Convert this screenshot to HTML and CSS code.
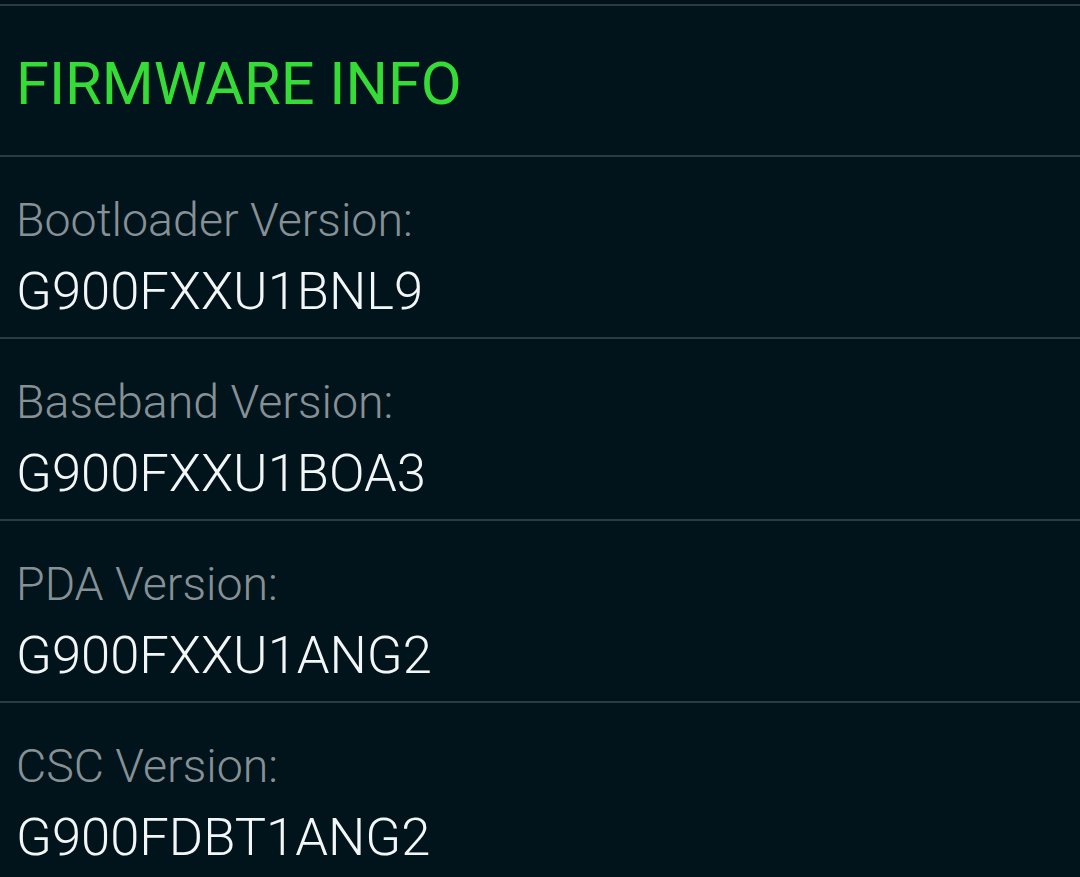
FILE: index.html
```html
<!DOCTYPE html>
<html lang="en">
<head>
<meta charset="utf-8">
<title>Firmware Info</title>
<link rel="stylesheet" href="styles.css">
</head>
<body>
<div class="screen">
  <div class="top-gap"></div>
  <div class="divider"></div>
  <header class="section-header">
    <h1 class="section-title">FIRMWARE INFO</h1>
  </header>
  <div class="divider"></div>
  <div class="row">
    <div class="label">Bootloader Version:</div>
    <div class="value">G900FXXU1BNL9</div>
  </div>
  <div class="divider"></div>
  <div class="row">
    <div class="label">Baseband Version:</div>
    <div class="value">G900FXXU1BOA3</div>
  </div>
  <div class="divider"></div>
  <div class="row">
    <div class="label">PDA Version:</div>
    <div class="value">G900FXXU1ANG2</div>
  </div>
  <div class="divider"></div>
  <div class="row">
    <div class="label">CSC Version:</div>
    <div class="value">G900FDBT1ANG2</div>
  </div>
  <div class="divider"></div>
</div>
</body>
</html>
```

FILE: styles.css
```css
html, body {
  margin: 0;
  padding: 0;
  background: #02141b;
  overflow: hidden;
  height: 877px;
}

.screen {
  display: flex;
  flex-direction: column;
  font-family: Roboto, "Liberation Sans", sans-serif;
  font-weight: 300;
}

.top-gap {
  height: 4px;
  background: #01111a;
}

.divider {
  height: 2px;
  background: #2b3b42;
  flex: none;
}

.section-header {
  padding: 48px 16px 41px;
}

.section-title {
  margin: 0;
  font-size: 59.5px;
  line-height: 60px;
  font-weight: 400;
  color: #36dc36;
}

.row {
  display: flex;
  flex-direction: column;
  padding: 36px 16px 0;
  height: 144px;
  flex: none;
}

.label {
  font-size: 46.5px;
  line-height: 54px;
  color: #879195;
}

.value {
  margin-top: 14px;
  font-size: 52.5px;
  line-height: 60px;
  color: #f3f6f6;
}
```
